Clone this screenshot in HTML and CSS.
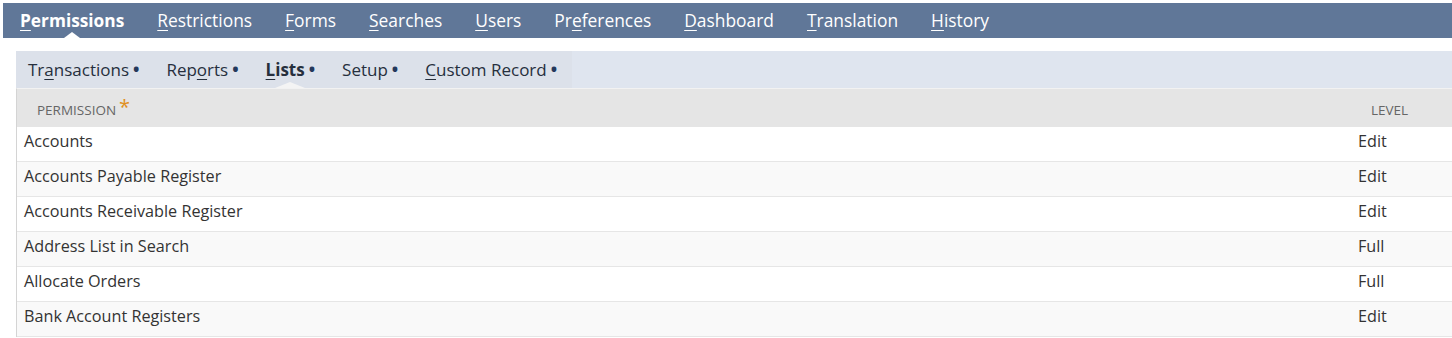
FILE: index.html
```html
<!DOCTYPE html>
<html>
<head>
<meta charset="utf-8">
<link rel="stylesheet" href="styles.css">
</head>
<body>
<div class="page">
  <nav class="topnav">
    <a class="tab active"><u>P</u>ermissions</a>
    <a class="tab"><u>R</u>estrictions</a>
    <a class="tab"><u>F</u>orms</a>
    <a class="tab"><u>S</u>earches</a>
    <a class="tab"><u>U</u>sers</a>
    <a class="tab">Pr<u>e</u>ferences</a>
    <a class="tab"><u>D</u>ashboard</a>
    <a class="tab"><u>T</u>ranslation</a>
    <a class="tab"><u>H</u>istory</a>
  </nav>
  <div class="panel">
    <div class="subnav">
      <div class="subtabs">
        <a class="stab">Tr<u>a</u>nsactions<span class="dot">•</span></a>
        <a class="stab">Rep<u>o</u>rts<span class="dot">•</span></a>
        <a class="stab active"><u>L</u>ists<span class="dot">•</span></a>
        <a class="stab">Setup<span class="dot">•</span></a>
        <a class="stab"><u>C</u>ustom Record<span class="dot">•</span></a>
      </div>
    </div>
    <div class="table">
      <div class="thead">
        <div class="th th-perm">Permission<span class="req">*</span></div>
        <div class="th th-level">Level</div>
      </div>
      <div class="row"><div class="cell">Accounts</div><div class="cell level">Edit</div></div>
      <div class="row alt"><div class="cell">Accounts Payable Register</div><div class="cell level">Edit</div></div>
      <div class="row"><div class="cell">Accounts Receivable Register</div><div class="cell level">Edit</div></div>
      <div class="row alt"><div class="cell">Address List in Search</div><div class="cell level">Full</div></div>
      <div class="row"><div class="cell">Allocate Orders</div><div class="cell level">Full</div></div>
      <div class="row alt"><div class="cell">Bank Account Registers</div><div class="cell level">Edit</div></div>
    </div>
  </div>
</div>
</body>
</html>
```
FILE: styles.css
```css
* { box-sizing: border-box; }
html, body { margin: 0; padding: 0; background: #fff; }
body { font-family: "Open Sans", "Liberation Sans", sans-serif; overflow: hidden; }
.page { padding: 3px 0 0 3px; }
.topnav {
  display: flex;
  height: 35px;
  background: #607798;
  padding-left: 0.5px;
  align-items: center;
}
.tab {
  position: relative;
  color: #fff;
  font-size: 17.4px;
  line-height: 35px;
  padding: 0 16.5px;
  white-space: nowrap;
}
.tab u { text-underline-offset: 3px; text-decoration-thickness: 1px; }
.tab.active { font-weight: 700; font-size: 17.3px; }
.tab.active::after {
  content: "";
  position: absolute;
  left: 50%;
  bottom: 0;
  margin-left: -8px;
  border-left: 8px solid transparent;
  border-right: 8px solid transparent;
  border-bottom: 6px solid #fff;
}
.panel { margin: 13px 0 0 13px; }
.subnav {
  height: 37px;
  background: #dfe5ef;
  display: flex;
}
.subtabs {
  display: flex;
  background: #dce1ea;
}
.stab {
  position: relative;
  font-size: 17px;
  color: #262f3d;
  line-height: 37px;
  padding: 0 15px 0 12px;
  white-space: nowrap;
}
.stab u { text-underline-offset: 3px; text-decoration-thickness: 1px; }
.stab .dot { color: #24385b; margin-left: 4px; font-size: 17px; font-weight: 700; }
.stab.active { font-weight: 700; }
.stab.active::after {
  content: "";
  position: absolute;
  left: 50%;
  bottom: 0;
  margin-left: -17px;
  border-left: 15px solid transparent;
  border-right: 15px solid transparent;
  border-bottom: 6px solid #f4f4f4;
}
.table {
  border-left: 1px solid #d4d4d4;
  border-top: 1px solid #f2f2f2;
}
.thead {
  display: grid;
  grid-template-columns: 1fr 101px;
  height: 38px;
  background: #e5e5e5;
  align-items: center;
  padding-top: 4px;
}
.th {
  font-size: 13.5px;
  color: #666;
  text-transform: uppercase;
}
.th-perm { padding-left: 20px; }
.th-level { padding-left: 20px; }
.req {
  color: #e0901f;
  font-size: 20px;
  position: relative;
  top: -1px;
  margin-left: 3px;
  line-height: 0;
}
.row {
  display: grid;
  grid-template-columns: 1fr 101px;
  height: 35px;
  border-bottom: 1px solid #e6e6e6;
  background: #fff;
  padding-top: 2px;
}
.row.alt { background: #f9f9f9; }
.cell {
  font-size: 16.2px;
  line-height: 24px;
  color: #333;
  padding-left: 7px;
}
.cell.level { padding-left: 7px; }
```
